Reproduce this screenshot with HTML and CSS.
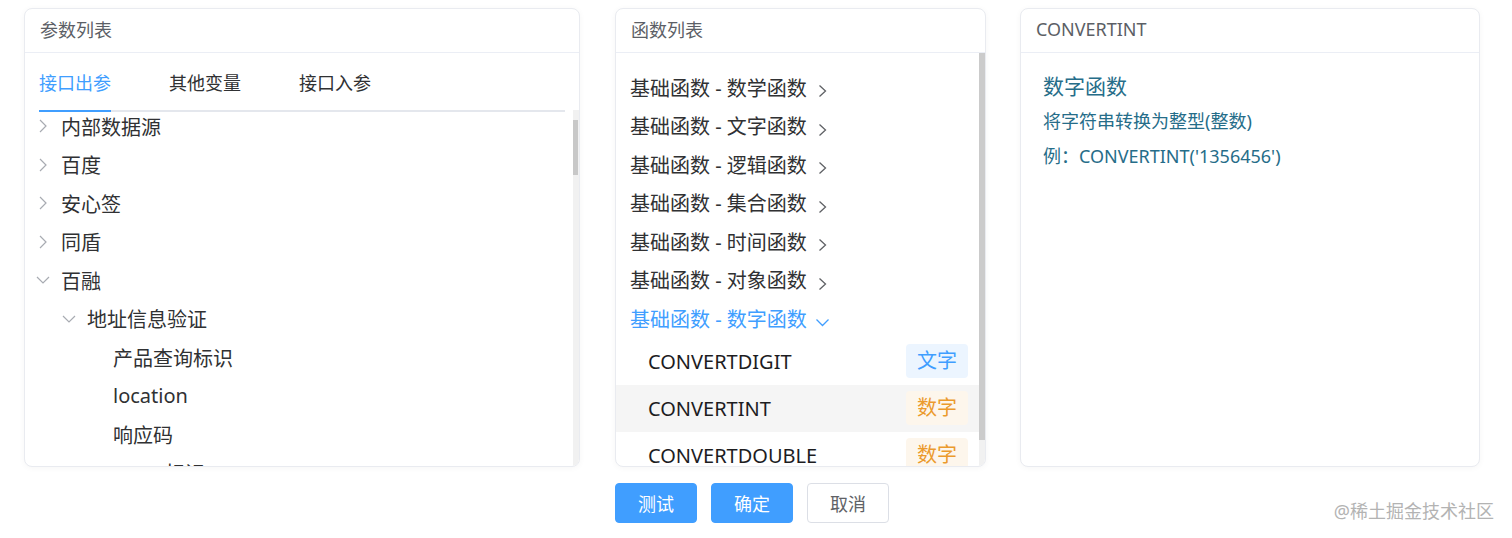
FILE: index.html
```html
<!DOCTYPE html>
<html lang="zh-CN">
<head>
<meta charset="utf-8">
<title>函数编辑</title>
<link rel="stylesheet" href="styles.css">
</head>
<body>
<div class="page">
  <div class="cards">
    <section class="card card-left">
      <div class="card-header">参数列表</div>
      <div class="left-body">
        <div class="left-main">
          <div class="tabs">
            <div class="tab active"><span>接口出参</span></div>
            <div class="tab"><span>其他变量</span></div>
            <div class="tab"><span>接口入参</span></div>
          </div>
          <div class="tree">
            <div class="tree-inner">
              <div class="row lv1"><i class="slot"><svg width="8" height="14" viewBox="0 0 8 14"><path d="M1 1 L7 7 L1 13" fill="none" stroke="#a8abb2" stroke-width="1.2"/></svg></i><span>内部数据源</span></div>
              <div class="row lv1"><i class="slot"><svg width="8" height="14" viewBox="0 0 8 14"><path d="M1 1 L7 7 L1 13" fill="none" stroke="#a8abb2" stroke-width="1.2"/></svg></i><span>百度</span></div>
              <div class="row lv1"><i class="slot"><svg width="8" height="14" viewBox="0 0 8 14"><path d="M1 1 L7 7 L1 13" fill="none" stroke="#a8abb2" stroke-width="1.2"/></svg></i><span>安心签</span></div>
              <div class="row lv1"><i class="slot"><svg width="8" height="14" viewBox="0 0 8 14"><path d="M1 1 L7 7 L1 13" fill="none" stroke="#a8abb2" stroke-width="1.2"/></svg></i><span>同盾</span></div>
              <div class="row lv1"><i class="slot"><svg width="14" height="8" viewBox="0 0 14 8"><path d="M1 1 L7 7 L13 1" fill="none" stroke="#a8abb2" stroke-width="1.2"/></svg></i><span>百融</span></div>
              <div class="row lv2"><i class="slot"><svg width="14" height="8" viewBox="0 0 14 8"><path d="M1 1 L7 7 L13 1" fill="none" stroke="#a8abb2" stroke-width="1.2"/></svg></i><span>地址信息验证</span></div>
              <div class="row lv3"><i class="slot"></i><span>产品查询标识</span></div>
              <div class="row lv3"><i class="slot"></i><span>location</span></div>
              <div class="row lv3"><i class="slot"></i><span>响应码</span></div>
              <div class="row lv3"><i class="slot"></i><span>verify标识</span></div>
            </div>
          </div>
        </div>
        <div class="vscroll left-scroll"><div class="thumb"></div></div>
      </div>
    </section>

    <section class="card card-mid">
      <div class="card-header">函数列表</div>
      <div class="mid-body">
        <div class="fn-list">
          <div class="fn-group"><span>基础函数 - 数学函数</span><svg class="chev-r" width="9" height="14" viewBox="0 0 9 14"><path d="M1.5 1.5 L7.5 7 L1.5 12.5" fill="none" stroke="#606266" stroke-width="1.3"/></svg></div>
          <div class="fn-group"><span>基础函数 - 文字函数</span><svg class="chev-r" width="9" height="14" viewBox="0 0 9 14"><path d="M1.5 1.5 L7.5 7 L1.5 12.5" fill="none" stroke="#606266" stroke-width="1.3"/></svg></div>
          <div class="fn-group"><span>基础函数 - 逻辑函数</span><svg class="chev-r" width="9" height="14" viewBox="0 0 9 14"><path d="M1.5 1.5 L7.5 7 L1.5 12.5" fill="none" stroke="#606266" stroke-width="1.3"/></svg></div>
          <div class="fn-group"><span>基础函数 - 集合函数</span><svg class="chev-r" width="9" height="14" viewBox="0 0 9 14"><path d="M1.5 1.5 L7.5 7 L1.5 12.5" fill="none" stroke="#606266" stroke-width="1.3"/></svg></div>
          <div class="fn-group"><span>基础函数 - 时间函数</span><svg class="chev-r" width="9" height="14" viewBox="0 0 9 14"><path d="M1.5 1.5 L7.5 7 L1.5 12.5" fill="none" stroke="#606266" stroke-width="1.3"/></svg></div>
          <div class="fn-group"><span>基础函数 - 对象函数</span><svg class="chev-r" width="9" height="14" viewBox="0 0 9 14"><path d="M1.5 1.5 L7.5 7 L1.5 12.5" fill="none" stroke="#606266" stroke-width="1.3"/></svg></div>
          <div class="fn-group open"><span>基础函数 - 数字函数</span><svg class="chev-d" width="15" height="9" viewBox="0 0 15 9"><path d="M1.5 1.5 L7.5 7.5 L13.5 1.5" fill="none" stroke="#409eff" stroke-width="1.3"/></svg></div>
          <div class="fn-item"><span>CONVERTDIGIT</span><span class="tag tag-text">文字</span></div>
          <div class="fn-item hover"><span>CONVERTINT</span><span class="tag tag-num">数字</span></div>
          <div class="fn-item"><span>CONVERTDOUBLE</span><span class="tag tag-num">数字</span></div>
        </div>
        <div class="vscroll mid-scroll"><div class="thumb"></div></div>
      </div>
    </section>

    <section class="card card-right">
      <div class="card-header">CONVERTINT</div>
      <div class="right-body">
        <div class="doc-title">数字函数</div>
        <div class="doc-line">将字符串转换为整型(整数)</div>
        <div class="doc-line">例：CONVERTINT('1356456')</div>
      </div>
    </section>
  </div>

  <div class="actions">
    <button class="btn btn-primary">测试</button>
    <button class="btn btn-primary">确定</button>
    <button class="btn btn-plain">取消</button>
  </div>

  <div class="watermark">@稀土掘金技术社区</div>
</div>
</body>
</html>
```

FILE: styles.css
```css
* { box-sizing: border-box; }

html, body {
  margin: 0;
  background: #fff;
}

body {
  font-family: "Noto Sans", "Noto Sans CJK SC", sans-serif;
  color: #303133;
}

.page {
  position: relative;
  width: 1512px;
  height: 538px;
  padding: 8px 0 0 24px;
  overflow: hidden;
}

.cards {
  display: flex;
  width: 1456px;
}

.card {
  height: 459px;
  border: 1px solid #e9ebf0;
  border-radius: 8px;
  overflow: hidden;
  display: flex;
  flex-direction: column;
  background: #fff;
  box-shadow: 0 1px 6px rgba(0, 0, 0, 0.04);
}

.card-left { width: 556px; }
.card-mid { width: 371px; margin-left: 35px; }
.card-right { width: 460px; margin-left: 34px; }

.card-header {
  flex: none;
  height: 44px;
  padding: 0 15px 3px;
  border-bottom: 1px solid #ebeef5;
  display: flex;
  align-items: center;
  font-size: 18px;
  color: #5c5f66;
}

/* left card */
.left-body {
  flex: 1;
  min-height: 0;
  display: flex;
}

.left-main {
  width: 526px;
  margin-left: 14px;
  display: flex;
  flex-direction: column;
  min-height: 0;
}

.tabs {
  display: flex;
  margin-top: 3px;
  border-bottom: 2px solid #e4e7ed;
}

.tab {
  padding: 0 29px;
  margin-bottom: -2px;
  font-size: 18px;
  color: #303133;
}

.tab:first-child { padding-left: 0; }

.tab span {
  display: block;
  height: 56px;
  line-height: 54px;
  border-bottom: 2px solid transparent;
}

.tab.active { color: #409eff; }
.tab.active span { border-bottom-color: #409eff; }

.tree {
  flex: 1;
  min-height: 0;
  overflow: hidden;
  margin-left: -4px;
}

.tree-inner { margin-top: -5px; }

.row {
  height: 38.5px;
  display: flex;
  align-items: center;
  font-size: 20px;
  color: #303133;
  white-space: nowrap;
}

.row.lv2 { padding-left: 26px; }
.row.lv3 { padding-left: 52px; }

.slot {
  width: 15px;
  height: 20px;
  margin-right: 11px;
  display: flex;
  align-items: center;
  justify-content: center;
  flex: none;
}

.vscroll {
  flex: none;
  width: 6px;
  background: #f1f1f1;
}

.left-scroll {
  margin-left: auto;
  margin-top: 57px;
}

.left-scroll .thumb {
  margin-top: 10px;
  height: 55px;
  width: 5px;
  background: #c8c8c8;
}

/* middle card */
.mid-body {
  flex: 1;
  min-height: 0;
  display: flex;
}

.fn-list {
  flex: 1;
  min-width: 0;
  padding-top: 15px;
  overflow: hidden;
}

.fn-group {
  height: 38.5px;
  padding-left: 14px;
  display: flex;
  align-items: center;
  font-size: 20px;
  color: #303133;
  white-space: nowrap;
}

.fn-group.open { color: #409eff; }

.chev-r {
  margin-left: 11px;
  margin-top: 8px;
  flex: none;
}

.chev-d {
  margin-left: 8px;
  margin-top: 8px;
  flex: none;
}

.fn-item {
  height: 47px;
  padding: 0 11px 0 32px;
  display: flex;
  align-items: center;
  justify-content: space-between;
  font-size: 20px;
  color: #1d1d1f;
}

.fn-item.hover { background: #f5f5f5; }

.tag {
  height: 34px;
  line-height: 34px;
  padding: 0 11px;
  border-radius: 4px;
  font-size: 20px;
}

.tag-text { background: #ecf5ff; color: #409eff; }
.tag-num { background: #fdf6ec; color: #eb9a2d; }

.mid-scroll .thumb {
  height: 387px;
  width: 6px;
  background: #cbcbcb;
}

/* right card */
.right-body {
  padding: 18px 22px;
  color: #266d89;
}

.doc-title {
  font-size: 21px;
  line-height: 30px;
  margin-bottom: 6px;
}

.doc-line {
  font-size: 18px;
  line-height: 28px;
  margin-bottom: 7px;
}

/* buttons */
.actions {
  width: 1456px;
  margin-top: 16px;
  display: flex;
  justify-content: center;
  gap: 14px;
}

.btn {
  width: 82px;
  height: 40px;
  border-radius: 4px;
  font-family: inherit;
  font-size: 18px;
  padding: 0;
  border: 1px solid #409eff;
  background: #409eff;
  color: #fff;
}

.btn-plain {
  background: #fff;
  border-color: #dcdfe6;
  color: #606266;
}

.watermark {
  position: absolute;
  right: 18px;
  top: 497px;
  font-size: 18px;
  color: #b3b3b3;
  white-space: nowrap;
}
```
